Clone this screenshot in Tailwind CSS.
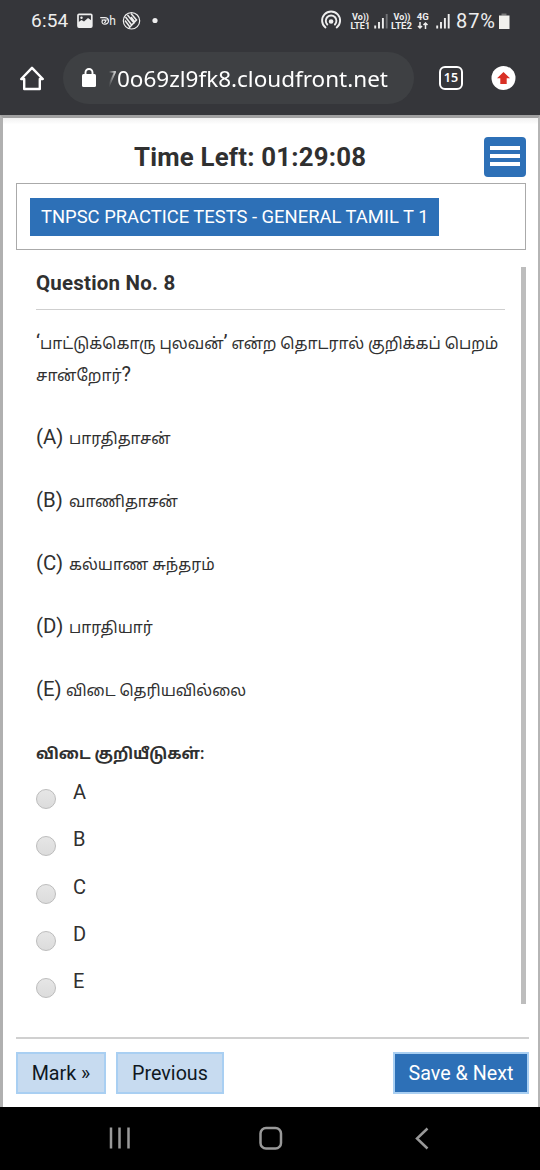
<!DOCTYPE html>
<html lang="ta">
<head>
<meta charset="utf-8">
<title>TNPSC Practice Tests</title>
<script src="https://cdn.jsdelivr.net/npm/@tailwindcss/browser@4"></script>
</head>
<body class="w-[540px] h-[1170px] overflow-hidden flex flex-col bg-white font-['Roboto','Noto_Sans_Tamil','Lohit_Tamil','FreeSans','Noto_Sans',sans-serif] text-[#303030]">
<header class="h-[115px] shrink-0 bg-[#35363a] text-white flex flex-col">
  <div class="h-[42px] flex items-center pl-[31px] text-[#eeeeee]">
    <span class="w-[46px] text-[19px] leading-[46px] tracking-[0.2px] whitespace-nowrap font-['Roboto']">6:54</span>
    <svg class="w-[400px] h-[42px] shrink-0" viewBox="77 0 400 42" fill="none" stroke="#eeeeee">
      <rect x="78" y="14.300" width="13.800" height="12.800" rx="1" stroke-width="1.700"/>
      <path d="M78 22.500l3.500-2.500 2.500 1.500 4-3.500 3.500 2.500v6.500H78z" fill="#eeeeee" stroke="none"/><circle cx="81.500" cy="17.800" r="1.200" fill="#eeeeee" stroke="none"/>
      <path d="M100.200 17.600h4.500c1.800 0 3.600.8 3.800 3 .2 2.300-1.800 3.600-3.700 3.500-2 0-3-1.200-2.700-2.600.3-1.700 2.600-2 3.300-.8.700 1.200-.5 2.100-1.300 1.500M101.500 20h6" stroke-width="1.200"/>
      <text x="109.300" y="25" font-family="Roboto" font-size="12" fill="#eeeeee" stroke="none">h</text>
      <circle cx="131.500" cy="20.800" r="8.200" stroke-width="1.200"/>
      <path d="M125.500 17l6.500 8.500M127.500 15l7 8.500M131 13.500l5.500 6.500-7.500 8M125 20.500l4.500 6M131 17l3.500 4.500" stroke-width="1.500"/>
      <circle cx="155" cy="20.500" r="2.600" fill="#eeeeee" stroke="none"/>
      <g stroke-width="1.900" stroke-linecap="round"><path d="M325.500 27.500a9 9 0 1 1 11.200 0M327.300 24.500a5.300 5.300 0 1 1 7.600 0"/><circle cx="331.100" cy="21.500" r="1.400" fill="#eeeeee"/></g>
      <g font-family="Roboto" font-weight="700" fill="#eeeeee" stroke="none" font-size="9.300">
        <text x="352" y="19.700" textLength="17" lengthAdjust="spacingAndGlyphs">Vo))</text><text x="350.500" y="28.600" textLength="19.500" lengthAdjust="spacingAndGlyphs">LTE1</text>
        <text x="393.500" y="19.700" textLength="17" lengthAdjust="spacingAndGlyphs">Vo))</text><text x="391" y="28.600" textLength="21" lengthAdjust="spacingAndGlyphs">LTE2</text>
        <text x="416.800" y="19.700" textLength="12" lengthAdjust="spacingAndGlyphs">4G</text>
      </g>
      <path d="M420 22v6m-2-2l2 2 2-2M425.500 29v-6m-2 2l2-2 2 2" stroke-width="1.500"/>
      <g stroke-width="1.900"><path d="M375.200 25.500v3M379 22v6.500M382.900 18v10.500M437.200 25.500v3M441 22v6.500M444.900 18v10.500M448.700 14v14.500"/><path d="M386.700 14v14.500" stroke="#707175"/></g>
    </svg>
    <div class="w-[63px] shrink-0 -ml-[21px] flex items-center">
      <span class="w-[42px] text-[20px] leading-[48px] tracking-[0.900px] whitespace-nowrap">87%</span>
      <svg class="w-[12px] h-[42px] shrink-0" viewBox="498 0 12 42"><path d="M501.500 13.500h5v2h-5z" fill="#777"/><path d="M499 15.500h10.500V29H499z" fill="#f1f1ed"/></svg>
    </div>
  </div>
  <div class="h-[73px] flex items-start pl-5 pt-[10px]">
    <svg class="w-[24px] h-[52px] mr-[19px]" viewBox="20 52 24 52" fill="none" stroke="#fff" stroke-width="2.400" stroke-linejoin="round"><path d="M21.200 79L32 67.800 42.800 79H39.800v10H24.200V79z"/></svg>
    <div class="w-[351px] h-[52px] rounded-full bg-[#3e4043] flex items-center pl-[19px]">
      <svg class="w-[14px] h-[20px] mr-[13px]" viewBox="0 0 14 20"><rect y="6" width="14" height="13" rx="1.500" fill="#fff"/><path d="M3.500 7V4.500a3.500 3.500 0 0 1 7 0V7" fill="none" stroke="#fff" stroke-width="1.900"/></svg>
      <div class="w-[279px] mt-[2px] flex justify-end overflow-hidden mask-l-from-[271px] mask-l-to-[279px]"><span class="whitespace-nowrap font-['Noto_Sans'] text-[22.500px] leading-[52px]">70o69zl9fk8.cloudfront.net</span></div>
    </div>
    <div class="ml-[25px] mt-[14px] w-[24px] h-[24px] rounded-[6px] border-[2.500px] border-white flex items-center justify-center font-['Noto_Sans'] font-semibold text-[12.500px] leading-none">15</div>
    <svg class="ml-[28px] mt-[14px] w-[25px] h-[24px]" viewBox="0 0 25 24"><circle cx="12.500" cy="12" r="12" fill="#fff"/><path d="M12.500 6l6.500 6.200h-3.300V18H9.300v-5.800H6z" fill="#d93025"/></svg>
  </div>
</header>
<main class="h-[992px] shrink-0 border-l-[3px] border-r-2 border-t-[3px] border-l-[#b0b0b0] border-r-[#b5b5b5] border-t-[#a0a0a0] flex flex-col">
  <div class="h-[65px] shrink-0 flex pl-[131px] bg-linear-to-b from-[#f1f1f1] from-0% to-white to-10%">
    <h1 class="w-[350px] pt-[24px] text-[25.800px] leading-[30px] tracking-[0.200px] font-bold whitespace-nowrap"><span>Time Left: 01:29:08</span></h1>
    <div class="mt-[19px] w-[42px] h-[40px] shrink-0 rounded-[4px] bg-[#2d70b7] flex flex-col items-center pt-[9px] gap-[4px]"><i class="w-[30px] h-[4px] bg-white"></i><i class="w-[30px] h-[4px] bg-white"></i><i class="w-[30px] h-[4px] bg-white"></i></div>
  </div>
  <div class="ml-[13px] w-[510px] h-[67px] shrink-0 border border-[#aaa] pt-[14px] pl-[13px]">
    <div class="w-[409px] h-[38px] bg-[#2d70b7] text-white text-[18.400px] leading-[38px] pl-[11px] whitespace-nowrap"><span>TNPSC PRACTICE TESTS - GENERAL TAMIL T 1</span></div>
  </div>
  <div class="mt-[17px] h-[737px] shrink-0 flex pl-[33px]">
    <section class="w-[469px] h-[737px] whitespace-nowrap">
      <h2 class="h-[43px] border-b-[1.500px] border-[#cfcfcf] text-[20.500px] leading-[32px] tracking-[0.200px] font-bold"><span>Question No. 8</span></h2>
      <p class="h-[94px] pt-[17px] text-[15.750px] leading-[31px]"><span><span class="text-[20px]">‘</span>பாட்டுக்கொரு புலவன்<span class="text-[20px]">’</span> என்ற தொடரால் குறிக்கப் பெறம்</span><br><span>சான்றோர்<span class="text-[20px]">?</span></span></p>
      <div class="pt-[2px] -mb-[2px] text-[15.700px] leading-[63px] *:h-[63px] *:flex *:items-baseline">
        <p><span class="text-[20.400px] w-[33px]">(A)</span><span>பாரதிதாசன்</span></p>
        <p><span class="text-[20.400px] w-[33px]">(B)</span><span>வாணிதாசன்</span></p>
        <p><span class="text-[20.400px] w-[33px]">(C)</span><span>கல்யாண சுந்தரம்</span></p>
        <p><span class="text-[20.400px] w-[33px]">(D)</span><span>பாரதியார்</span></p>
        <p><span class="text-[20.400px] w-[30px]">(E)</span><span>விடை தெரியவில்லை</span></p>
        <p class="font-bold pt-[1px]"><span>விடை குறியீடுகள்:</span></p>
      </div>
      <div class="text-[20px] leading-[20px] *:h-[47.300px] *:flex">
        <label><i class="mt-[7px] mr-[17px] w-5 h-5 rounded-full border border-[#bcbcbc] bg-linear-to-b from-[#e6e6e6] to-[#dcdcdc]"></i>A</label>
        <label><i class="mt-[7px] mr-[17px] w-5 h-5 rounded-full border border-[#bcbcbc] bg-linear-to-b from-[#e6e6e6] to-[#dcdcdc]"></i>B</label>
        <label><i class="mt-[7px] mr-[17px] w-5 h-5 rounded-full border border-[#bcbcbc] bg-linear-to-b from-[#e6e6e6] to-[#dcdcdc]"></i>C</label>
        <label><i class="mt-[7px] mr-[17px] w-5 h-5 rounded-full border border-[#bcbcbc] bg-linear-to-b from-[#e6e6e6] to-[#dcdcdc]"></i>D</label>
        <label><i class="mt-[7px] mr-[17px] w-5 h-5 rounded-full border border-[#bcbcbc] bg-linear-to-b from-[#e6e6e6] to-[#dcdcdc]"></i>E</label>
      </div>
    </section>
    <div class="ml-[15.500px] w-[5px] h-full bg-[#bdbdbd]"></div>
  </div>
  <footer class="ml-[13px] mt-[33px] w-[513px] border-t-2 border-[#d0d0d0] pt-[13px] flex text-[19.700px] leading-[40px] text-[#10181f] text-center whitespace-nowrap">
    <div class="w-[90px] h-[42px] border-2 border-[#a9cff2] bg-[#c7dbf0]">Mark »</div>
    <div class="ml-[10px] w-[108px] h-[42px] border-2 border-[#a9cff2] bg-[#c7dbf0]">Previous</div>
    <div class="ml-auto w-[136px] h-[42px] border-2 border-[#a9cff2] bg-[#2d70b7] text-white">Save &amp; Next</div>
  </footer>
</main>
<nav class="h-[63px] shrink-0 bg-black">
  <svg class="w-[540px] h-[63px]" viewBox="0 1107 540 63" fill="none" stroke="#999" stroke-width="2.500"><path d="M111 1127.500v21M119.500 1127.500v21M128.500 1127.500v21"/><rect x="260.500" y="1128" width="20.500" height="20.500" rx="5.500"/><path d="M427.500 1128.500l-10.500 10 10.500 10"/></svg>
</nav>
</body>
</html>
